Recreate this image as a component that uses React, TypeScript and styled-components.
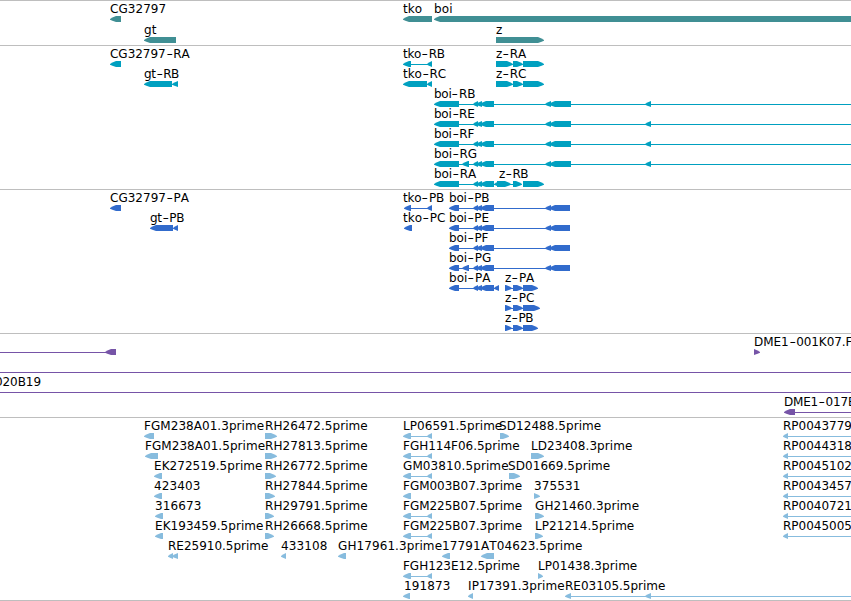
import React from 'react'
import styled, { createGlobalStyle } from 'styled-components'

const VIEW_WIDTH = 851
const HEAD = 6
const FONT_SIZE = 12

type Part =
  | { kind: 'left' | 'right'; from: number; to: number }
  | { kind: 'line'; from: number; to: number }

interface Feature {
  label?: string
  x: number
  parts: Part[]
}

interface TrackData {
  id: string
  color: string
  pitch: number
  height: number
  lanes: Feature[][]
}

const GlobalStyle = createGlobalStyle`
  body {
    margin: 0;
    background: #fff;
    overflow: hidden;
  }
`

const Browser = styled.main`
  display: flex;
  flex-direction: column;
  width: 851px;
  height: 601px;
  overflow: hidden;
  background: #fff;
  font-family: 'DejaVu Sans', sans-serif;
  font-size: ${FONT_SIZE}px;
  font-kerning: none;
  color: #000;
`

const TrackPanel = styled.section<{ $height: number }>`
  flex: none;
  box-sizing: border-box;
  height: ${(p) => p.$height}px;
  padding-top: 2px;
  border-top: 1px solid #bebebe;
`

const BottomRule = styled.div`
  flex: none;
  height: 1px;
  background: #bebebe;
`

const LaneRow = styled.div<{ $height: number }>`
  position: relative;
  height: ${(p) => p.$height}px;
`

// Labels sit at genomic positions, so they may run over each other
const LabelText = styled.span<{ $x: number; $spacing: number }>`
  position: absolute;
  top: -1px;
  left: ${(p) => p.$x}px;
  line-height: 14px;
  letter-spacing: ${(p) => p.$spacing}px;
  white-space: pre;
`

const Dash = styled.span`
  display: inline-block;
  width: 7.6px;
  letter-spacing: 0;
  text-align: center;
  transform: scaleX(1.5);
`

const Glyphs = styled.svg`
  display: block;
  overflow: visible;
`

// [natural advance in em, wanted advance in px]
const DIGIT_ADVANCE = [0.636, 7.75]
const ADVANCES: Record<string, number[]> = {
  A: [0.684, 8.3],
  B: [0.686, 7.2],
  C: [0.698, 8.4],
  D: [0.77, 9],
  E: [0.632, 6.6],
  F: [0.575, 6.2],
  G: [0.775, 9],
  H: [0.752, 9],
  I: [0.295, 3.6],
  K: [0.656, 8],
  L: [0.557, 6.2],
  M: [0.863, 10.5],
  P: [0.603, 7],
  R: [0.695, 7.7],
  S: [0.635, 7.2],
  T: [0.611, 7],
  b: [0.635, 7.7],
  e: [0.615, 7.4],
  g: [0.635, 7.6],
  i: [0.278, 3.4],
  k: [0.579, 7],
  m: [0.974, 12],
  o: [0.612, 7.5],
  p: [0.635, 7.8],
  r: [0.411, 5],
  t: [0.392, 4.8],
  z: [0.525, 6.4],
  '.': [0.318, 4],
}

const labelSpacing = (text: string) => {
  const chars = text.replace('-', '').split('')
  const extra = chars.reduce((sum, char) => {
    const [natural, wanted] = ADVANCES[char] ?? DIGIT_ADVANCE
    return sum + wanted - natural * FONT_SIZE
  }, 0)
  return Number((extra / chars.length).toFixed(3))
}

const left = (from: number, to: number): Part => ({ kind: 'left', from, to })
const right = (from: number, to: number): Part => ({ kind: 'right', from, to })
const line = (from: number, to: number): Part => ({ kind: 'line', from, to })

const feature = (label: string, x: number, ...parts: Part[]): Feature => ({
  label,
  x,
  parts,
})

const zExons = [right(496, 513), right(513, 523), right(523, 544)]
const boiMiddle = [left(473, 478), left(476, 482), left(480, 494)]

const boiRna = (label: string, ...extra: Part[]) =>
  feature(
    label,
    434,
    line(440, VIEW_WIDTH),
    left(434, 459),
    ...extra,
    ...boiMiddle,
    left(545, 551),
    left(549, 571),
    left(645, 651)
  )

const boiProtein = (label: string, ...extra: Part[]) =>
  feature(
    label,
    449,
    line(455, 560),
    left(449, 459),
    ...extra,
    ...boiMiddle,
    left(545, 551),
    left(549, 570)
  )

const zProtein = (label: string, end: number) =>
  feature(
    label,
    505,
    line(505, 530),
    right(505, 512),
    right(513, 523),
    right(523, end)
  )

const tkoEst = (label: string) =>
  feature(label, 403, line(408, 430), left(403, 411), left(427, 432))

const rpEst = (label: string) =>
  feature(label, 783, line(786, VIEW_WIDTH), left(783, 788))

const tracks: TrackData[] = [
  {
    id: 'gene',
    color: '#408f94',
    pitch: 21,
    height: 45,
    lanes: [
      [
        feature('CG32797', 110, left(110, 121)),
        feature('tko', 403, left(403, 432)),
        feature('boi', 434, left(434, 860)),
      ],
      [feature('gt', 144, left(144, 176)), feature('z', 496, right(496, 544))],
    ],
  },
  {
    id: 'mrna',
    color: '#00a0c0',
    pitch: 20,
    height: 144,
    lanes: [
      [
        feature('CG32797-RA', 110, left(110, 121)),
        feature('tko-RB', 403, line(408, 430), left(403, 411), left(427, 432)),
        feature('z-RA', 496, ...zExons),
      ],
      [
        feature('gt-RB', 144, left(144, 172), left(172, 178)),
        feature('tko-RC', 403, left(403, 427), left(427, 432)),
        feature('z-RC', 496, ...zExons),
      ],
      [boiRna('boi-RB')],
      [boiRna('boi-RE')],
      [boiRna('boi-RF')],
      [boiRna('boi-RG', left(462, 469))],
      [
        feature(
          'boi-RA',
          434,
          line(440, 497),
          left(434, 459),
          ...boiMiddle,
          left(494, 500)
        ),
        feature(
          'z-RB',
          499,
          line(508, 515),
          right(497, 511),
          right(513, 522),
          right(523, 544)
        ),
      ],
    ],
  },
  {
    id: 'protein',
    color: '#316bcc',
    pitch: 20,
    height: 144,
    lanes: [
      [
        feature('CG32797-PA', 110, left(110, 121)),
        feature('tko-PB', 403, line(408, 430), left(404, 411), left(427, 432)),
        boiProtein('boi-PB'),
      ],
      [
        feature('gt-PB', 150, left(150, 173), left(173, 178)),
        feature('tko-PC', 403, left(404, 412)),
        boiProtein('boi-PE'),
      ],
      [boiProtein('boi-PF')],
      [boiProtein('boi-PG', left(462, 469))],
      [
        feature(
          'boi-PA',
          449,
          line(455, 497),
          left(449, 459),
          ...boiMiddle,
          left(494, 499)
        ),
        zProtein('z-PA', 538),
      ],
      [zProtein('z-PC', 540)],
      [zProtein('z-PB', 538)],
    ],
  },
  {
    id: 'clone',
    color: '#7654a7',
    pitch: 20,
    height: 84,
    lanes: [
      [
        { x: 0, parts: [line(0, 110), left(105, 116)] },
        feature('DME1-001K07.F', 754, right(754, 760)),
      ],
      [{ x: 0, parts: [line(0, VIEW_WIDTH)] }],
      [feature('020B19', -5, line(0, VIEW_WIDTH))],
      [feature('DME1-017B', 784, line(790, VIEW_WIDTH), left(784, 795))],
    ],
  },
  {
    id: 'est',
    color: '#87bcde',
    pitch: 20,
    height: 183,
    lanes: [
      [
        feature('FGM238A01.3prime', 144, left(144, 154)),
        feature('RH26472.5prime', 265, right(265, 277)),
        tkoEst('LP06591.5prime'),
        feature('SD12488.5prime', 499, right(500, 509)),
        rpEst('RP0043779'),
      ],
      [
        feature('FGM238A01.5prime', 145, left(145, 158)),
        feature('RH27813.5prime', 265, right(265, 277)),
        tkoEst('FGH114F06.5prime'),
        feature('LD23408.3prime', 531, right(531, 544)),
        rpEst('RP0044318'),
      ],
      [
        feature('EK272519.5prime', 154, left(154, 162)),
        feature('RH26772.5prime', 265, right(265, 276)),
        tkoEst('GM03810.5prime'),
        feature('SD01669.5prime', 508, right(509, 520)),
        rpEst('RP0045102'),
      ],
      [
        feature('423403', 154, left(154, 162)),
        feature('RH27844.5prime', 265, right(265, 275)),
        feature('FGM003B07.3prime', 403, left(403, 411)),
        feature('375531', 534, right(534, 540)),
        rpEst('RP0043457'),
      ],
      [
        feature('316673', 155, left(155, 163)),
        feature('RH29791.5prime', 265, right(265, 274)),
        tkoEst('FGM225B07.5prime'),
        feature('GH21460.3prime', 535, right(535, 544)),
        rpEst('RP0040721'),
      ],
      [
        feature('EK193459.5prime', 155, left(155, 163)),
        feature('RH26668.5prime', 265, right(265, 274)),
        tkoEst('FGM225B07.3prime'),
        feature('LP21214.5prime', 535, right(535, 543)),
        rpEst('RP0045005'),
      ],
      [
        feature('RE25910.5prime', 168, left(168, 173), left(172, 178)),
        feature('433108', 281, left(281, 286)),
        feature('GH17961.3prime', 338, left(338, 346)),
        feature('17791', 442, left(442, 450)),
        feature('AT04623.5prime', 481, left(481, 494)),
      ],
      [tkoEst('FGH123E12.5prime'), feature('LP01438.3prime', 538, right(538, 543))],
      [
        feature('191873', 404, left(403, 410)),
        feature('IP17391.3prime', 468, left(468, 473)),
        feature(
          'RE03105.5prime',
          565,
          line(568, VIEW_WIDTH),
          left(565, 571),
          left(645, 651)
        ),
      ],
    ],
  },
]

const Glyph: React.FC<{ part: Part }> = ({ part }) => {
  const { kind, from, to } = part
  if (kind === 'line') {
    return <rect x={from} y={16} width={to - from} height={1} />
  }

  const head = Math.min(HEAD, to - from)
  const tip = kind === 'left' ? from : to
  const base = kind === 'left' ? to : from
  const dir = kind === 'left' ? 1 : -1
  const points = [
    [tip, 16],
    [tip + dir * head * 0.4, 14.4],
    [tip + dir * head, 13],
    [base, 13],
    [base, 19],
    [tip + dir * head, 19],
    [tip + dir * head * 0.4, 17.8],
    [tip, 16.7],
  ]
  return <polygon points={points.map((p) => p.join(',')).join(' ')} />
}

const Label: React.FC<{ text: string; x: number }> = ({ text, x }) => {
  const [name, suffix] = text.split('-')
  return (
    <LabelText $x={x} $spacing={labelSpacing(text)}>
      {name}
      {suffix && <Dash>-</Dash>}
      {suffix}
    </LabelText>
  )
}

const Lane: React.FC<{ features: Feature[]; pitch: number; color: string }> = ({
  features,
  pitch,
  color,
}) => (
  <LaneRow $height={pitch}>
    <Glyphs width={VIEW_WIDTH} height={pitch} fill={color}>
      {features.map((item) =>
        item.parts.map((part, i) => <Glyph key={`${item.x}-${i}`} part={part} />)
      )}
    </Glyphs>
    {features.map(
      (item) =>
        item.label && <Label key={item.label} text={item.label} x={item.x} />
    )}
  </LaneRow>
)

const App: React.FC = () => (
  <>
    <GlobalStyle />
    <Browser>
      {tracks.map((track) => (
        <TrackPanel key={track.id} $height={track.height}>
          {track.lanes.map((features, i) => (
            <Lane
              key={i}
              features={features}
              pitch={track.pitch}
              color={track.color}
            />
          ))}
        </TrackPanel>
      ))}
      <BottomRule />
    </Browser>
  </>
)

export default App
